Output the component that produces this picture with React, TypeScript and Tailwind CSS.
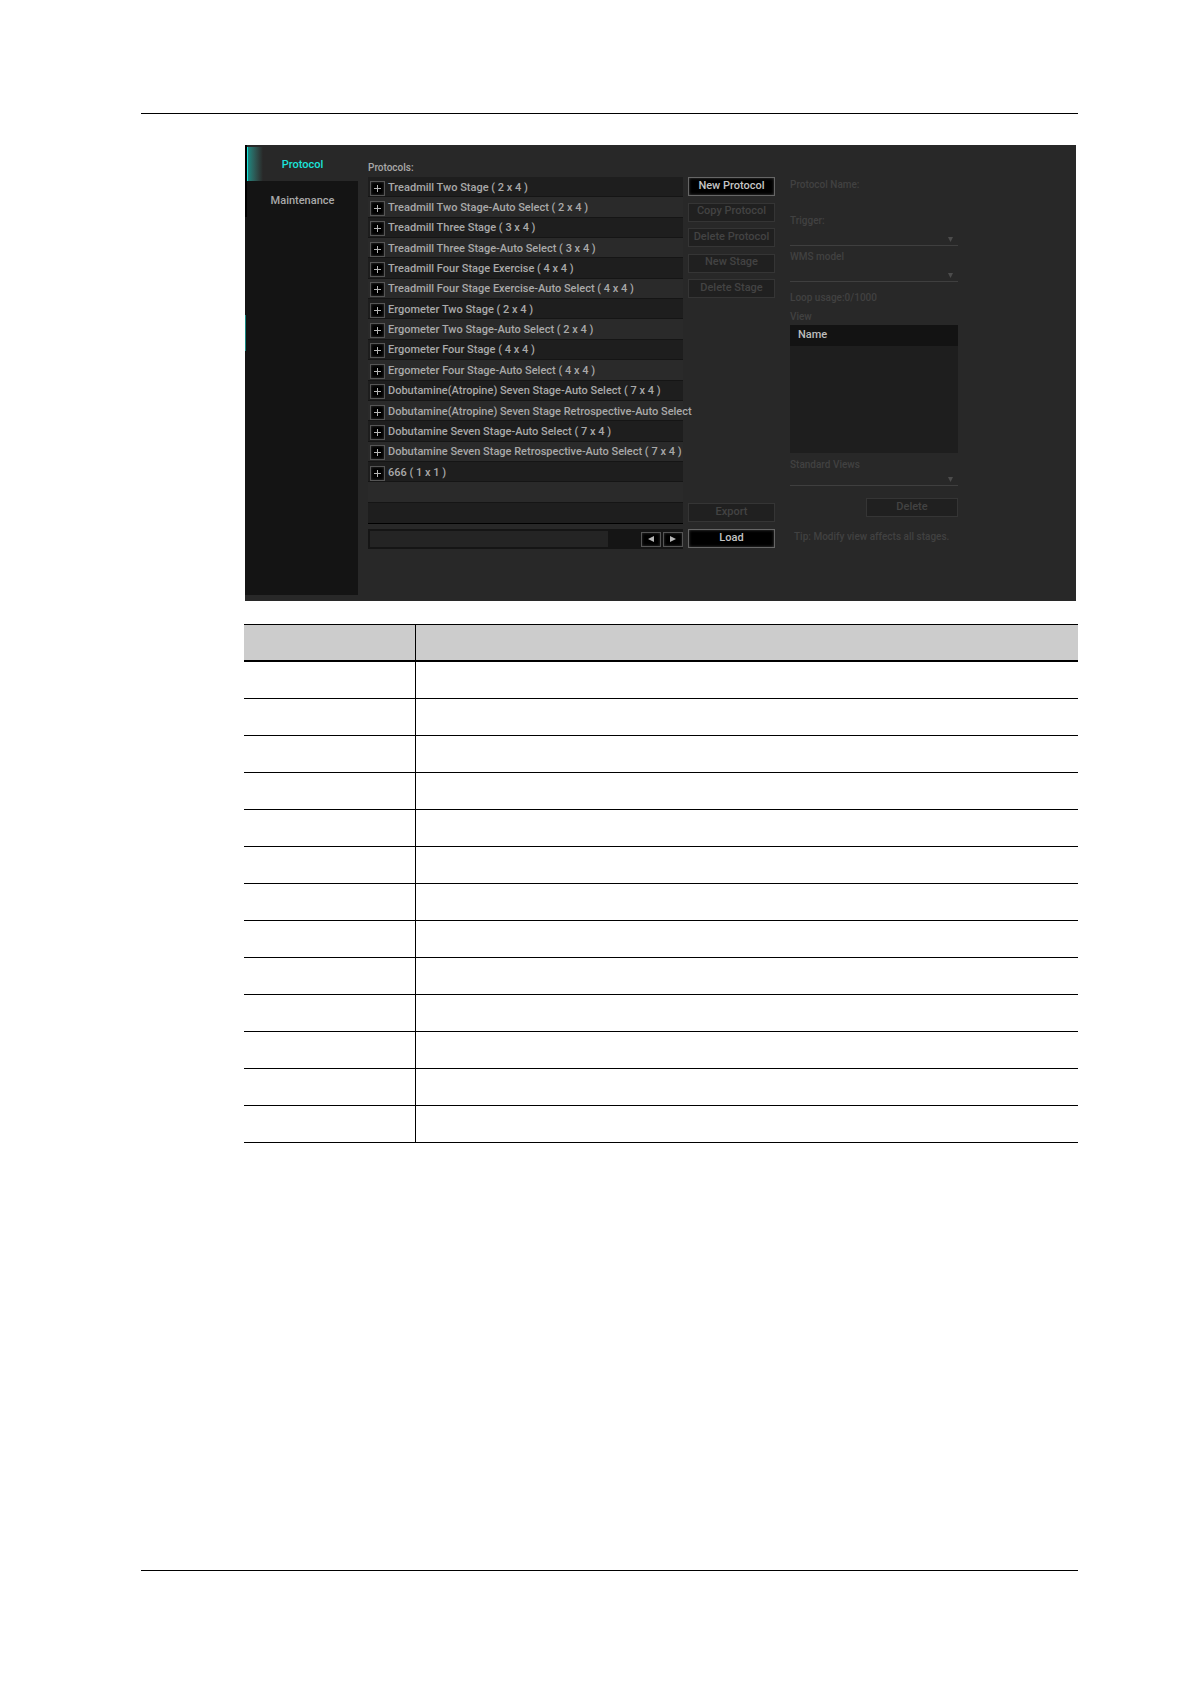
import { useState } from "react";

const protocols = [
  "Treadmill Two Stage ( 2 x 4 )",
  "Treadmill Two Stage-Auto Select ( 2 x 4 )",
  "Treadmill Three Stage ( 3 x 4 )",
  "Treadmill Three Stage-Auto Select ( 3 x 4 )",
  "Treadmill Four Stage Exercise ( 4 x 4 )",
  "Treadmill Four Stage Exercise-Auto Select ( 4 x 4 )",
  "Ergometer Two Stage ( 2 x 4 )",
  "Ergometer Two Stage-Auto Select ( 2 x 4 )",
  "Ergometer Four Stage ( 4 x 4 )",
  "Ergometer Four Stage-Auto Select ( 4 x 4 )",
  "Dobutamine(Atropine) Seven Stage-Auto Select ( 7 x 4 )",
  "Dobutamine(Atropine) Seven Stage Retrospective-Auto Select",
  "Dobutamine Seven Stage-Auto Select ( 7 x 4 )",
  "Dobutamine Seven Stage Retrospective-Auto Select ( 7 x 4 )",
  "666 ( 1 x 1 )",
];

const actions = ["New Protocol", "Copy Protocol", "Delete Protocol", "New Stage", "Delete Stage"];

function PanelButton({ label, disabled = false }: { label: string; disabled?: boolean }) {
  return (
    <button
      type="button"
      disabled={disabled}
      className="h-[19px] w-full border border-[#666] bg-black pb-[2px] text-[11px] leading-[14px] font-medium whitespace-nowrap text-[#c4c4c4] shadow-[inset_0_0_3px_#444] disabled:border-[#353535] disabled:bg-[#202020] disabled:text-[#434343] disabled:shadow-none"
    >
      {label}
    </button>
  );
}

function EmptySelect({ id }: { id: string }) {
  return (
    <div className="relative">
      <select
        id={id}
        disabled
        className="block h-[13px] w-full appearance-none border-b border-[#3f3f3f] bg-transparent"
      />
      <svg viewBox="0 0 6 6" className="pointer-events-none absolute top-1 right-[5px] size-[5px] fill-[#4c4c4c]">
        <path d="M0 0H6L3 6Z" />
      </svg>
    </div>
  );
}

function ProtocolList() {
  return (
    <ul className="grid h-[347px] auto-rows-fr grid-cols-1 border-b border-black bg-[#1e1e1e]">
      {protocols.map((name) => (
        <li
          key={name}
          className="flex min-h-0 items-center gap-[3px] border-b border-[#151515] pt-[3px] pl-[2px] even:bg-[#2a2a2a]"
        >
          <button
            type="button"
            aria-label={`Expand ${name}`}
            className="flex size-[15px] shrink-0 items-center justify-center border border-[#555] bg-black shadow-[inset_0_0_3px_#333]"
          >
            <svg viewBox="0 0 7 7" className="size-[7px] stroke-[#b5b5b5]">
              <path d="M3.5 0V7M0 3.5H7" />
            </svg>
          </button>
          <span className="pb-px text-[11px] leading-[14px] font-medium whitespace-nowrap text-[#a9a9a9]">{name}</span>
        </li>
      ))}
      <li className="border-b border-[#151515] even:bg-[#2a2a2a]" />
      <li />
    </ul>
  );
}

function HorizontalScroller() {
  return (
    <div className="mt-[5px] flex h-5 items-center justify-between bg-[#151515] pl-[2px]">
      <div className="h-4 w-[76%] bg-[#242424]" />
      <div className="flex gap-[2px]">
        {["M6 0V6L0 3Z", "M0 0V6L6 3Z"].map((d, i) => (
          <button
            key={d}
            type="button"
            aria-label={i === 0 ? "Scroll left" : "Scroll right"}
            className="flex h-[15px] w-5 items-center justify-center border border-[#555] bg-black shadow-[inset_0_0_3px_#333]"
          >
            <svg viewBox="0 0 6 6" className="size-[6px] fill-[#b5b5b5]">
              <path d={d} />
            </svg>
          </button>
        ))}
      </div>
    </div>
  );
}

function StageForm() {
  return (
    <form className="mt-8 w-[168px] shrink-0 text-[10px] leading-4 font-medium text-[#414141]">
      <label htmlFor="protocol-name" className="block">Protocol Name:</label>
      <input id="protocol-name" disabled className="block h-5 w-full bg-transparent" />
      <label htmlFor="trigger" className="mb-1 block">Trigger:</label>
      <EmptySelect id="trigger" />
      <label htmlFor="wms-model" className="mt-[3px] mb-1 block">WMS model</label>
      <EmptySelect id="wms-model" />
      <p className="mt-2">Loop usage:0/1000</p>
      <p className="mt-[3px]">View</p>
      <div className="h-32 bg-[#1e1e1e]">
        <table className="w-full bg-[#131313]">
          <thead>
            <tr>
              <th className="h-[21px] p-0 pb-[2px] pl-2 text-left text-[11px] font-medium text-[#bdbdbd]">Name</th>
            </tr>
          </thead>
        </table>
      </div>
      <label htmlFor="standard-views" className="mt-1 block">Standard Views</label>
      <EmptySelect id="standard-views" />
      <div className="mt-3 ml-auto w-[92px]">
        <PanelButton label="Delete" disabled />
      </div>
      <p className="mt-3 ml-1 whitespace-nowrap">Tip: Modify view affects all stages.</p>
    </form>
  );
}

export default function App() {
  const [tab, setTab] = useState("Protocol");

  return (
    <div className="flex min-h-screen flex-col bg-white pt-[113px] pr-28 pb-[113px] pl-[141px] font-[Roboto,sans-serif]">
      <header className="border-t border-black" />

      <main className="mt-[31px] ml-[103px]">
        <section className="mr-[2px] ml-px flex h-[456px] overflow-hidden bg-[#282828]">
          <nav className="relative mb-[6px] flex w-[113px] shrink-0 flex-col bg-[#141414]">
            {["Protocol", "Maintenance"].map((name) => (
              <button
                key={name}
                type="button"
                aria-pressed={tab === name}
                onClick={() => setTab(name)}
                className="flex h-9 w-full border-l-2 border-black text-[11px] leading-4 font-medium text-[#a9a9a9] aria-pressed:bg-[#282828] aria-pressed:text-[#1be3da]"
              >
                <span
                  className={
                    tab === name
                      ? "mt-[2px] w-4 self-stretch border-l border-[#1be3da] bg-linear-to-r from-[#16867f] to-[#282828]"
                      : "w-4"
                  }
                />
                <span className="flex-1 self-center pt-[3px] pr-4 text-center">{name}</span>
              </button>
            ))}
            <span className="absolute top-[170px] left-0 h-9 w-px bg-[#16867f]" />
          </nav>

          <div className="ml-[10px] w-[315px] shrink-0">
            <h2 className="mt-[15px] mb-px text-[10px] leading-4 font-medium text-[#a9a9a9]">Protocols:</h2>
            <ProtocolList />
            <HorizontalScroller />
          </div>

          <div className="mt-8 mr-[15px] ml-[5px] flex h-[371px] w-[87px] shrink-0 flex-col gap-[7px]">
            <div className="flex h-[121px] flex-col justify-between">
              {actions.map((label, i) => (
                <PanelButton key={label} label={label} disabled={i > 0} />
              ))}
            </div>
            <div className="mt-auto">
              <PanelButton label="Export" disabled />
            </div>
            <PanelButton label="Load" />
          </div>

          <StageForm />
        </section>

        <table className="mt-[23px] w-full table-fixed border-collapse">
          <colgroup>
            <col className="w-[171px]" />
            <col />
          </colgroup>
          <thead>
            <tr className="h-9 border-t border-b-2 border-black bg-[#ccc]">
              <th className="border-r border-black" />
              <th />
            </tr>
          </thead>
          <tbody>
            {Array.from({ length: 13 }, (_, i) => (
              <tr key={i} className="h-[37px] border-b border-black first:h-[38px]">
                <td className="border-r border-black" />
                <td />
              </tr>
            ))}
          </tbody>
        </table>
      </main>

      <footer className="mt-auto border-t border-black" />
    </div>
  );
}
